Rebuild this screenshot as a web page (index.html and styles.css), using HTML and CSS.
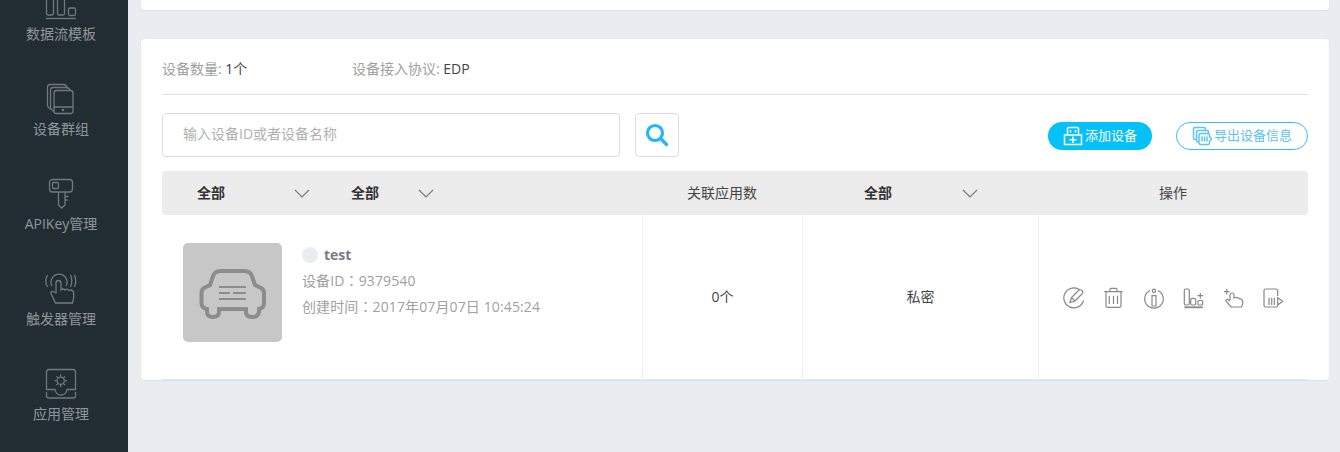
FILE: index.html
```html
<!DOCTYPE html>
<html lang="zh-CN">
<head>
<meta charset="utf-8">
<title>设备列表</title>
<link rel="stylesheet" href="styles.css">
</head>
<body>
<div class="app">
  <nav class="sidebar">
    <div class="nav-list">
      <a class="nav-item">
        <svg class="nav-icon" viewBox="0 0 40 34"><rect x="5.5" y="2" width="7" height="26" rx="1.5"/><rect x="16.5" y="2" width="7" height="26" rx="1.5"/><rect x="27.5" y="21" width="7" height="7.5" rx="1.5"/><path d="M5 31.5H35"/></svg>
        <span class="nav-label">数据流模板</span>
      </a>
      <a class="nav-item">
        <svg class="nav-icon" viewBox="0 0 40 34"><rect x="13" y="8.5" width="19" height="23" rx="2.5"/><path d="M13 25H32M10 27.5L8.5 26.5Q6.5 25.5 6.5 23V5Q6.5 2.5 9 2.5H22Q25 2.5 26 5M13 29.5L11.5 28.5Q9.5 27.5 9.5 25V8Q9.5 5.5 12 5.5H25Q28 5.5 29 8"/><circle cx="22" cy="28" r=".6"/></svg>
        <span class="nav-label">设备群组</span>
      </a>
      <a class="nav-item">
        <svg class="nav-icon" viewBox="0 0 40 34"><rect x="8.5" y="2.5" width="23" height="12.5" rx="3"/><rect x="11.5" y="5.5" width="6" height="6" rx="1"/><path d="M17.5 15V28L20.7 31L24 28V15M24 19.5H27.5M24 23H26.5"/></svg>
        <span class="nav-label">APIKey管理</span>
      </a>
      <a class="nav-item">
        <svg class="nav-icon" viewBox="0 0 40 34"><path d="M11 14A8 8 0 1 1 25 14M6.5 3Q3 9 6.5 15M29.5 3Q32 9 29.5 15M33.5 3Q36 9 33.5 15"/><path d="M15 21V11Q15 8.5 17.5 8.5Q20 8.5 20 11V18Q22 16 24 18Q26 16 28 18.5Q31 17 32.5 20Q33.5 25 31.5 31H14.5L10 21.5Q9.5 19 12 19.5Z"/></svg>
        <span class="nav-label">触发器管理</span>
      </a>
      <a class="nav-item">
        <svg class="nav-icon" viewBox="0 0 40 34"><path d="M5.5 22.5V5Q5.5 2.5 8 2.5H32Q34.5 2.5 34.5 5V22.5H26Q25 28 20 28Q15 28 14 22.5ZM5.5 25V29Q5.5 31 8 31H32Q34.5 31 34.5 29V25"/><circle cx="19.7" cy="13.7" r="3.6"/><path d="M19.7 7.5V9.5M19.7 18V20M13.5 13.7H15.5M24 13.7H26M15.4 9.4L16.8 10.8M22.6 16.6L24 18M24 9.4L22.6 10.8M16.8 16.6L15.4 18"/></svg>
        <span class="nav-label">应用管理</span>
      </a>
    </div>
  </nav>
  <main class="main">
    <div class="card-stub"></div>
    <section class="card">
      <div class="summary">
        <div class="summary-item">设备数量: <b class="summary-value">1个</b></div>
        <div class="summary-item">设备接入协议: <b class="summary-value">EDP</b></div>
      </div>
      <div class="toolbar">
        <div class="search-input">输入设备ID或者设备名称</div>
        <button class="search-btn">
          <svg class="search-icon" viewBox="0 0 24 24"><circle cx="10" cy="10" r="7.5"/><path d="M15.5 15.5L21.5 21.5"/></svg>
        </button>
        <div class="toolbar-actions">
          <a class="btn btn-primary">
            <svg class="btn-icon" viewBox="0 0 20 20"><path d="M4.5 9V2.5Q4.5 1.5 5.5 1.5H14.5Q15.5 1.5 15.5 2.5V9M7.5 4V6.5M12.5 4V6.5M1.5 9H18.5V18.5H1.5ZM10 10.5V17M6.5 13.8H13.5"/></svg>
            <span class="btn-text">添加设备</span>
          </a>
          <a class="btn btn-outline">
            <svg class="btn-icon" viewBox="0 0 20 20"><path d="M4 13.5H3Q1.5 13.5 1.5 12V3Q1.5 1.5 3 1.5H12Q13.5 1.5 13.5 3V4M6.5 16.5Q4.5 16 4.5 14V6Q4.5 4.5 6 4.5H15Q16.5 4.5 16.5 6V7"/><path d="M8.5 7.5H16Q17.5 7.5 17.5 9V10.5L19.5 13L17.5 15.5V17Q17.5 18.5 16 18.5H8.5Q7 18.5 7 17V9Q7 7.5 8.5 7.5ZM10 10.5V15.5M12.5 10.5V15.5M15 10.5V15.5"/></svg>
            <span class="btn-text">导出设备信息</span>
          </a>
        </div>
      </div>
      <div class="table-head">
        <div class="head-cell head-name">
          <div class="dropdown dropdown-a"><b>全部</b><svg class="chevron" viewBox="0 0 16 9"><path d="M1 1L8 8L15 1"/></svg></div>
          <div class="dropdown dropdown-b"><b>全部</b><svg class="chevron" viewBox="0 0 16 9"><path d="M1 1L8 8L15 1"/></svg></div>
        </div>
        <div class="head-cell head-apps">关联应用数</div>
        <div class="head-cell head-secret">
          <div class="dropdown dropdown-c"><b>全部</b><svg class="chevron" viewBox="0 0 16 9"><path d="M1 1L8 8L15 1"/></svg></div>
        </div>
        <div class="head-cell head-ops">操作</div>
      </div>
      <div class="table-row">
        <div class="cell cell-device">
          <div class="thumb">
            <svg class="thumb-car" viewBox="0 0 99 99"><path class="car-body" d="M38 28H61Q67 28 69 33L72 42L78 45Q81 46.500 81 50V60Q81 65 76 66V69Q75 74 69 74Q63 74 63 69V66H36V69Q36 74 30 74Q24 74 24 69V66Q18.500 65 18.500 60V50Q18.500 46.500 21 45L27 42L30 33Q32 28 38 28Z"/><path class="car-lines" d="M36 44H63M36 50H47M50 50H63M36 56H63"/></svg>
          </div>
          <div class="device-info">
            <div class="device-name"><i class="status-dot"></i><b>test</b></div>
            <div class="device-line">设备ID<span class="fw-colon" lang="zh-TW">：</span>9379540</div>
            <div class="device-line">创建时间<span class="fw-colon" lang="zh-TW">：</span>2017年07月07日 10:45:24</div>
          </div>
        </div>
        <div class="cell cell-apps">0个</div>
        <div class="cell cell-secret">私密</div>
        <div class="cell cell-ops">
          <svg class="op-icon" viewBox="0 0 24 24"><path d="M18 5A10 10 0 1 0 21.500 15.500M8 17.500L9.500 12.500L16.500 5.500Q18.500 4 20 5.500Q21.500 7 20 9L13 16ZM9.500 12.500L13 16"/></svg>
          <svg class="op-icon" viewBox="0 0 24 24"><path d="M2.300 6.700H20.700M8 6.700V4.300Q8 3.300 9 3.300H14Q15 3.300 15 4.300V6.700M4 6.700V20.800Q4 22.300 5.500 22.300H17.500Q19 22.300 19 20.800V6.700M7.300 10.700V19M11.500 10.700V19M15.500 10.700V19"/></svg>
          <svg class="op-icon" viewBox="0 0 24 24"><path d="M8 5.500A9.300 9.300 0 1 0 16 5.500M10 10.700H14V21H10Z"/><circle cx="12" cy="5.700" r="1.600"/></svg>
          <svg class="op-icon" viewBox="0 0 24 24"><rect x="2.300" y="4" width="5" height="16" rx="1.500"/><rect x="8.700" y="13.300" width="5" height="6.700" rx="1.500"/><rect x="16" y="15.500" width="4.700" height="4.500" rx="1"/><path d="M15.500 10.700H21M18.300 8V13.500"/><path class="op-base" d="M2.300 22.300H20.700"/></svg>
          <svg class="op-icon" viewBox="0 0 24 24"><path d="M2 6.700H7.500M4.700 4V9.500"/><path d="M8 15V9.500Q8 8 10 8Q12 8 12 9.500V13Q14 11.500 15 13Q16.500 12 17.500 14Q20 13.500 20.700 16V19L19.500 22H9L4 16Q3.500 14 6 14.500L8 16"/></svg>
          <svg class="op-icon" viewBox="0 0 24 24"><path d="M15.700 11V5.500Q15.700 4 14 4H3.500Q2 4 2 5.500V20.500Q2 22 3.500 22H14Q15.700 22 15.700 20.500V19M7 12.700V20M9.700 12.700V20M12.300 12.700V20M15.700 12.700L20.700 16.300L15.700 20Z"/></svg>
        </div>
      </div>
    </section>
  </main>
</div>
</body>
</html>
```
FILE: styles.css
```css
* { box-sizing: border-box; }
html, body { margin: 0; padding: 0; height: 452px; overflow: hidden; }
body {
  font-family: "Open Sans", "Noto Sans CJK SC", sans-serif;
  font-size: 14px;
  color: #333;
  background: #e9edf2;
}
.app { display: flex; height: 452px; overflow: hidden; }

.sidebar { width: 128px; flex: none; height: 452px; overflow: hidden; background: #222d33; }
.nav-list { display: flex; flex-direction: column; margin-top: -13px; padding-right: 6px; }
.nav-item { display: flex; flex-direction: column; align-items: center; height: 95px; flex: none; }
.nav-icon { width: 40px; height: 34px; display: block; fill: none; stroke: #6f787e; stroke-width: 1.3; }
.nav-label { margin-top: 3px; line-height: 20px; color: #8f969b; white-space: nowrap; }

.main { flex: 1; min-width: 0; padding: 0 11px 0 13px; }
.card-stub { height: 10px; background: #fff; border-radius: 0 0 4px 4px; box-shadow: 0 1px 1px #dde1e6; }
.card {
  margin-top: 29px;
  height: 341px;
  padding: 0 21px;
  background: #fff;
  border-radius: 4px;
  box-shadow: 0 0 1px #d5d9de, 0 1px 1px #dde1e6;
}

.summary { display: flex; height: 56px; align-items: center; padding-top: 5px; border-bottom: 1px solid #dfe3e8; }
.summary-item { color: #a0a0a0; width: 190px; line-height: 20px; }
.summary-value { font-weight: 400; color: #444; }

.toolbar { display: flex; align-items: flex-start; margin-top: 18px; height: 58px; }
.search-input {
  width: 458px; height: 44px;
  padding-left: 20px;
  line-height: 40px;
  color: #b0b0b0;
  border: 1px solid #dddddd;
  border-radius: 4px;
}
.search-btn {
  width: 44px; height: 44px;
  margin-left: 15px;
  padding: 0;
  display: flex; align-items: center; justify-content: center;
  background: #fff;
  border: 1px solid #dddddd;
  border-radius: 4px;
}
.search-icon { width: 24px; height: 24px; fill: none; stroke: #22b8f5; stroke-width: 3.2; stroke-linecap: round; }
.toolbar-actions { margin-left: auto; display: flex; gap: 24px; padding-top: 9px; }
.btn { display: flex; align-items: center; justify-content: center; gap: 2px; height: 28px; border-radius: 14px; white-space: nowrap; font-size: 13px; line-height: 24px; }
.btn-text { padding-bottom: 2px; }
.btn-primary { width: 104px; background: #06c1f7; color: #fff; }
.btn-outline { width: 132px; background: #fff; color: #5cc3f3; border: 1px solid #3dbdf5; }
.btn-icon { width: 20px; height: 20px; flex: none; fill: none; stroke-width: 1.5; stroke: currentColor; }

.table-head { display: flex; height: 44px; line-height: 42px; background: #ececec; border-radius: 4px; color: #444; white-space: nowrap; }
.head-cell { display: flex; align-items: center; }
.head-name { width: 480px; }
.head-apps { width: 160px; justify-content: center; }
.head-secret { width: 236px; }
.head-ops { flex: 1; justify-content: center; }
.dropdown { display: flex; align-items: center; flex: none; }
.dropdown b { font-weight: 700; color: #333; flex: none; }
.dropdown-a { width: 189px; padding-left: 35px; gap: 69px; }
.dropdown-b { gap: 39px; }
.dropdown-c { padding-left: 62px; gap: 70px; }
.chevron { width: 16px; height: 9px; display: block; flex: none; fill: none; stroke: #777; stroke-width: 1.1; }

.table-row { display: flex; height: 165px; border-bottom: 1px solid #e5e8ec; }
.cell { display: flex; align-items: center; justify-content: center; border-right: 1px solid #eeeeee; color: #444; line-height: 162px; }
.cell-device { width: 481px; padding: 28px 0 0 21px; align-items: flex-start; justify-content: flex-start; gap: 20px; line-height: 26px; }
.cell-apps { width: 160px; }
.cell-secret { width: 236px; }
.cell-ops { flex: 1; border-right: 0; gap: 16px; }

.thumb { width: 99px; height: 99px; flex: none; background: #c7c7c7; border-radius: 5px; }
.thumb-car { width: 99px; height: 99px; display: block; }
.car-body { fill: none; stroke: #8c8c8c; stroke-width: 4; }
.car-lines { fill: none; stroke: #8c8c8c; stroke-width: 2; }

.device-info { color: #a0a0a0; line-height: 26px; white-space: nowrap; margin-top: -1px; }
.device-name { display: flex; align-items: center; gap: 6px; height: 25px; color: #7a7a85; }
.device-name b { font-weight: 700; }
.device-line { height: 26px; letter-spacing: .12px; }
.status-dot { width: 16px; height: 16px; border-radius: 50%; background: #e9edf2; }
.fw-colon { font-family: "Noto Sans CJK TC", sans-serif; }

.op-icon { width: 24px; height: 24px; flex: none; fill: none; stroke: #888; stroke-width: 1.2; }
.op-base { stroke-width: 1.8; }
```
